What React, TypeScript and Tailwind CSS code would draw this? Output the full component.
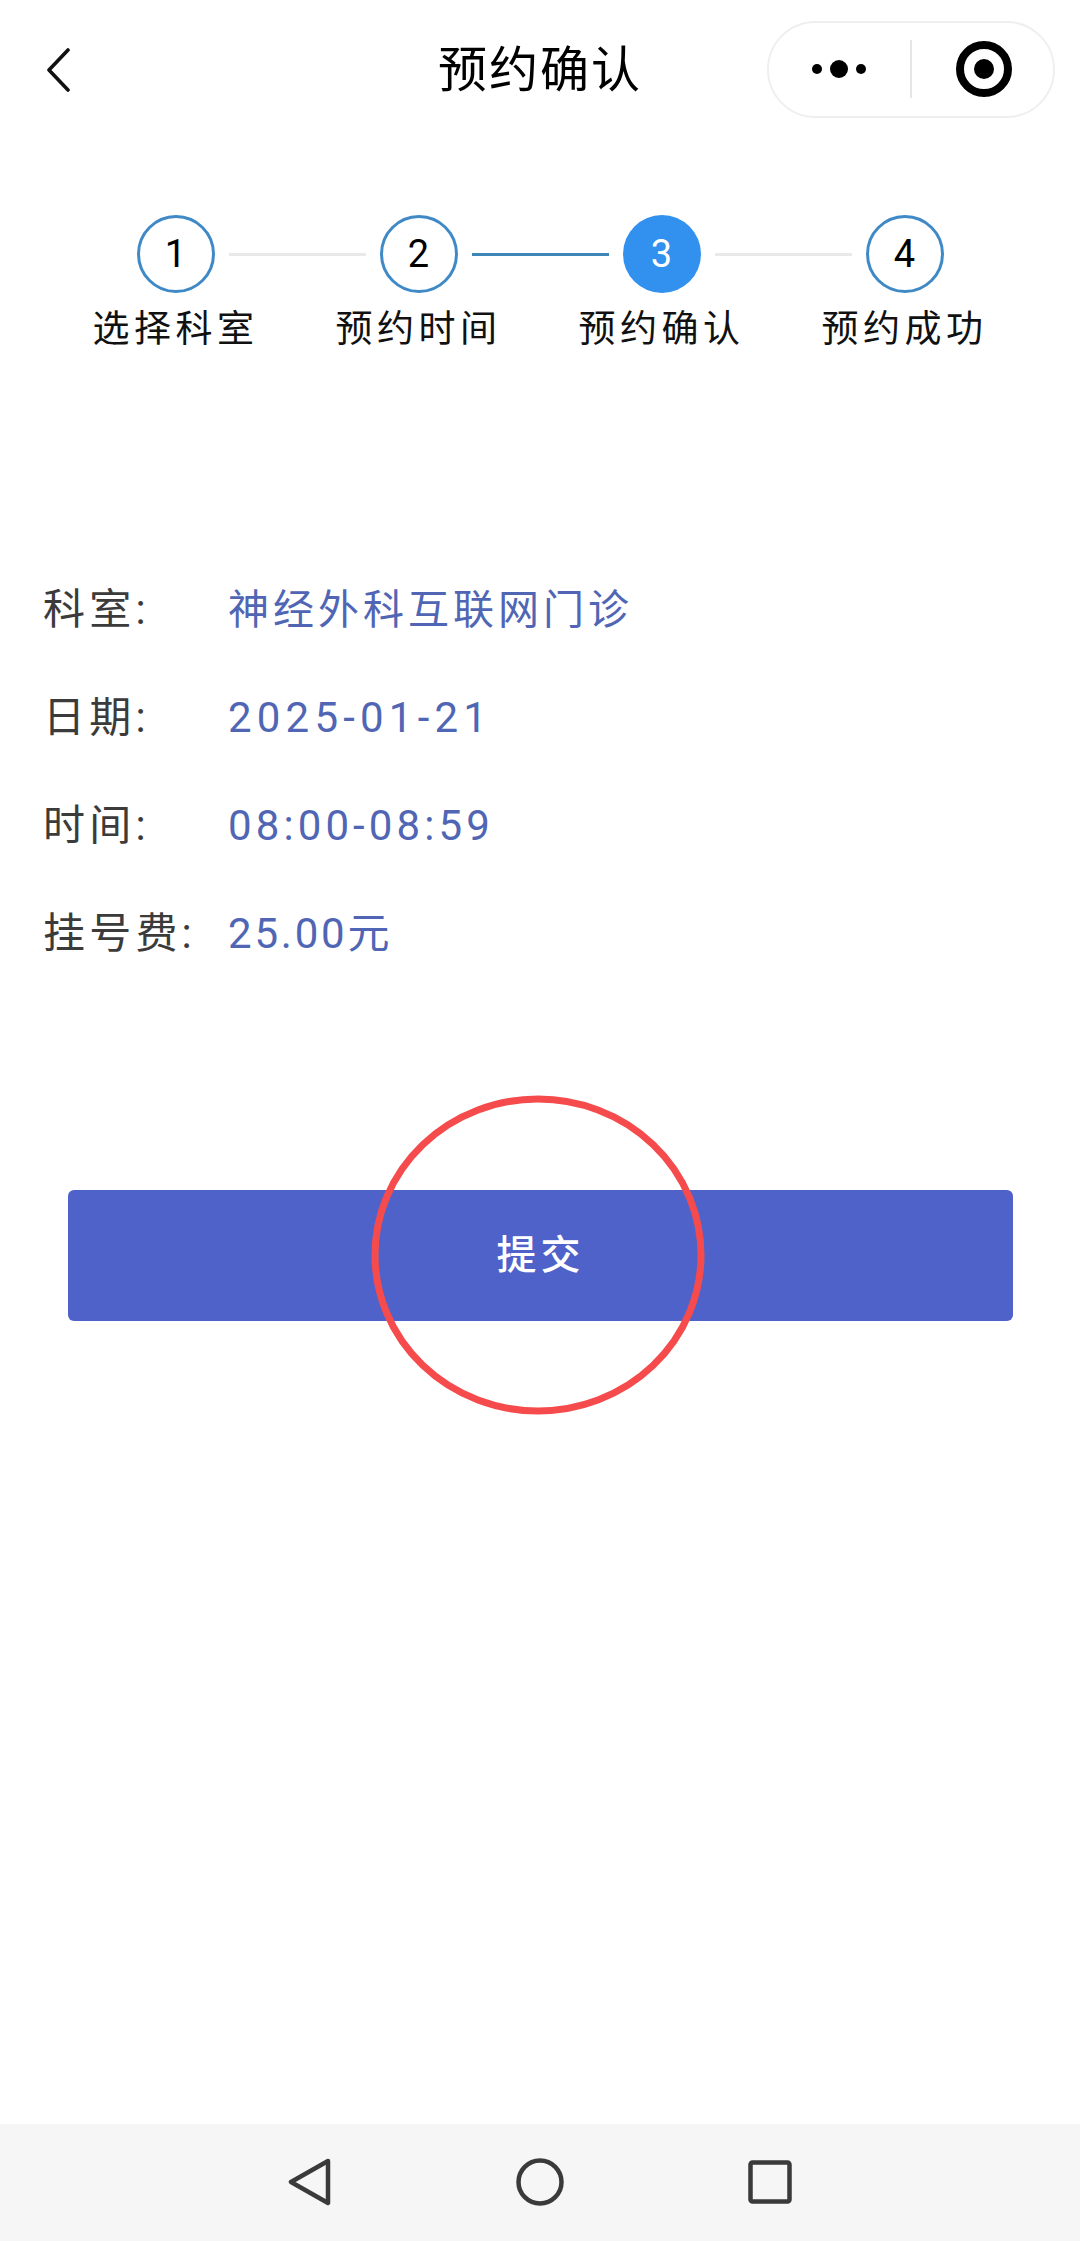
const font = { fontFamily: '"Roboto", "Noto Sans CJK SC", sans-serif' };

const steps = [
  { n: "1", label: "选择科室" },
  { n: "2", label: "预约时间" },
  { n: "3", label: "预约确认", active: true },
  { n: "4", label: "预约成功" },
];

const rows = [
  { k: "科室:", v: "神经外科互联网门诊", c: "text-[41px] tracking-[4px]" },
  { k: "日期:", v: "2025-01-21", c: "text-[42px] tracking-[5.2px]" },
  { k: "时间:", v: "08:00-08:59", c: "text-[42px] tracking-[4.1px]" },
  { k: "挂号费:", v: "25.00元", c: "text-[42px] tracking-[2.8px]" },
];

function Circle({ n, active }: { n: string; active?: boolean }) {
  return (
    <div
      className={
        active
          ? "flex h-[78px] w-[78px] shrink-0 items-center justify-center rounded-full bg-[#3291ee] pr-[1px] text-[38px] text-white"
          : "flex h-[78px] w-[78px] shrink-0 items-center justify-center rounded-full border-[3px] border-[#3f8ac6] bg-white pr-[1px] text-[38px] text-black"
      }
    >
      {n}
    </div>
  );
}

function Line({ blue }: { blue?: boolean }) {
  return <div className={blue ? "h-[3px] w-[137px] bg-[#3f86b8]" : "h-[3px] w-[137px] bg-[#e9e9e9]"} />;
}

export default function App() {
  return (
    <div className="relative flex h-[2241px] w-[1080px] flex-col overflow-hidden bg-white" style={font}>
      <header className="grid h-[138px] grid-cols-[392px_auto_1fr] items-center pl-[46px] pr-[25px]">
        <svg width="24" height="44" viewBox="0 0 24 44" fill="none" className="mt-[2px]">
          <path d="M22 2 L3 22 L22 42" stroke="#111" strokeWidth="3.6" strokeLinecap="round" strokeLinejoin="round" />
        </svg>
        <h1 className="mt-[3px] text-[49px] font-normal leading-none tracking-[2px] text-black">预约确认</h1>
        <div className="flex h-[97px] w-[288px] items-center justify-self-end rounded-full border-2 border-[#efefef] bg-white">
          <div className="flex w-[141px] items-center justify-center gap-[8px] pr-[2px]">
            <span className="h-[10px] w-[10px] rounded-full bg-black" />
            <span className="h-[18px] w-[18px] rounded-full bg-black" />
            <span className="h-[10px] w-[10px] rounded-full bg-black" />
          </div>
          <div className="h-[58px] w-[2px] bg-[#e6e6e6]" />
          <div className="flex flex-1 items-center justify-center pl-[2px]">
            <div className="flex h-[56px] w-[56px] items-center justify-center rounded-full border-[8px] border-black">
              <span className="h-[20px] w-[20px] rounded-full bg-black" />
            </div>
          </div>
        </div>
      </header>

      <section className="mt-[77px]">
        <div className="flex items-center gap-[14px] pl-[137px]">
          <Circle n="1" />
          <Line />
          <Circle n="2" />
          <Line blue />
          <Circle n="3" active />
          <Line />
          <Circle n="4" />
        </div>
        <div className="mt-[12px] flex pl-[54px]">
          {steps.map((s) => (
            <div key={s.n} className="w-[243px] text-center text-[37px] leading-[50px] tracking-[4.5px] text-[#111]">
              {s.label}
            </div>
          ))}
        </div>
      </section>

      <section className="mt-[229px] flex flex-col gap-[56px] pl-[43px]">
        {rows.map((r) => (
          <div key={r.k} className="flex h-[52px] items-center leading-[52px]">
            <span className="w-[185px] text-[42px] tracking-[4.2px] text-[#3b3b3b]">{r.k}</span>
            <span className={`text-[#5066b4] ${r.c}`}>{r.v}</span>
          </div>
        ))}
      </section>

      <div className="ml-[68px] mr-[67px] mt-[230px] flex h-[131px] items-center justify-center rounded-[6px] bg-[#4f62c9] text-[40px] font-medium tracking-[4px] text-white">
        提交
      </div>

      <svg width="334" height="320" viewBox="0 0 334 320" fill="none" className="absolute left-[371px] top-[1095px]">
        <ellipse cx="167" cy="160" rx="163" ry="156" stroke="#f64b4c" strokeWidth="7" />
      </svg>

      <nav className="mt-auto flex h-[117px] items-center justify-center bg-[#f6f6f6] pb-[1px]">
        <div className="flex w-[503px] items-center justify-between">
          <svg width="44" height="48" viewBox="0 0 44 48" fill="none" className="-translate-x-[1px]">
            <path d="M40 3 L3 24 L40 45 Z" stroke="#3a3a3a" strokeWidth="4.5" strokeLinejoin="round" />
          </svg>
          <svg width="48" height="48" viewBox="0 0 48 48" fill="none">
            <circle cx="24" cy="24" r="21.5" stroke="#3a3a3a" strokeWidth="4.5" />
          </svg>
          <svg width="44" height="44" viewBox="0 0 44 44" fill="none">
            <rect x="2.5" y="2.5" width="39" height="39" rx="2" stroke="#3a3a3a" strokeWidth="4.5" />
          </svg>
        </div>
      </nav>
    </div>
  );
}
